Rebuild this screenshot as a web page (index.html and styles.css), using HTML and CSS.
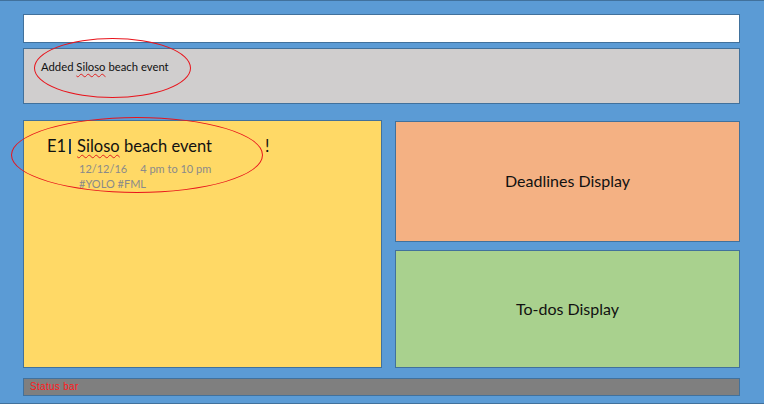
FILE: index.html
```html
<!DOCTYPE html>
<html lang="en">
<head>
<meta charset="utf-8">
<title>Event planner mockup</title>
<link rel="stylesheet" href="styles.css">
</head>
<body>
<div class="app">
  <div class="command-box"></div>
  <div class="result-box">
    <span class="result-text">Added <span class="misspelt">Siloso</span> beach event</span>
  </div>
  <div class="main">
    <div class="event-panel">
      <div class="event-card">
        <div class="event-title-row">
          <span class="event-title"><span class="event-id">E1</span><span class="event-sep"></span><span class="misspelt">Siloso</span> beach event</span>
          <span class="event-flag">!</span>
        </div>
        <div class="event-meta">
          <span class="event-date">12/12/16</span>
          <span class="event-time">4 pm to 10 pm</span>
        </div>
        <div class="event-tags">#YOLO #FML</div>
      </div>
    </div>
    <div class="side-column">
      <div class="panel deadlines">Deadlines Display</div>
      <div class="panel todos">To-dos Display</div>
    </div>
  </div>
  <div class="status-bar">Status bar</div>
  <div class="annotation annotation-result"></div>
  <div class="annotation annotation-event"></div>
</div>
</body>
</html>
```
FILE: styles.css
```css
html, body {
  margin: 0;
  padding: 0;
  background: #5b9bd5;
}

.app {
  position: relative;
  box-sizing: border-box;
  width: 764px;
  height: 404px;
  background: #5b9bd5;
  border-top: 1px solid #41719c;
  border-bottom: 1px solid #41719c;
  padding: 13px 24px 0 23px;
  display: flex;
  flex-direction: column;
  font-family: "Lato", "Open Sans", sans-serif;
  color: #111;
}

.command-box {
  box-sizing: border-box;
  height: 29px;
  background: #ffffff;
  border: 1px solid #41719c;
}

.result-box {
  box-sizing: border-box;
  height: 56px;
  margin-top: 5px;
  background: #d0cece;
  border: 1px solid #41719c;
  padding: 11px 0 0 17px;
  font-size: 11.3px;
}

.misspelt {
  text-decoration: underline wavy #e02020;
  text-decoration-thickness: 1px;
  text-underline-offset: 2px;
}

.main {
  margin-top: 16px;
  height: 248px;
  display: grid;
  grid-template-columns: 359px 345px;
  column-gap: 13px;
}

.event-panel {
  box-sizing: border-box;
  background: #ffd966;
  border: 1px solid #41719c;
  padding: 15px 0 0 23px;
}

.event-title-row {
  display: flex;
  align-items: baseline;
  font-size: 16.5px;
  color: #111;
}

.event-title {
  width: 218px;
  display: flex;
  align-items: baseline;
  white-space: pre;
}

.event-sep {
  display: inline-block;
  width: 2px;
  height: 15px;
  background: #1a3a5a;
  margin: 0 6px 0 3px;
  align-self: center;
}

.event-flag {
  font-size: 16.5px;
}

.event-meta {
  margin: 6px 0 0 32px;
  font-size: 11px;
  color: #8a8a8a;
  display: flex;
  gap: 13px;
}

.event-tags {
  margin: 2px 0 0 32px;
  font-size: 11px;
  color: #8a8a8a;
}

.side-column {
  display: flex;
  flex-direction: column;
  gap: 8px;
  padding-top: 1px;
}

.panel {
  box-sizing: border-box;
  border: 1px solid #41719c;
  display: flex;
  align-items: center;
  justify-content: center;
  font-size: 16px;
  color: #111;
  padding-bottom: 2px;
}

.deadlines {
  height: 121px;
  background: #f4b183;
}

.todos {
  height: 118px;
  background: #a9d18e;
}

.status-bar {
  box-sizing: border-box;
  margin-top: 10px;
  height: 18px;
  background: #7f7f7f;
  border: 1px solid #41719c;
  padding: 2px 0 0 6px;
  font-family: "Liberation Sans", sans-serif;
  font-size: 10px;
  color: #ff1a1a;
  letter-spacing: 0.3px;
}

.annotation {
  position: absolute;
  box-sizing: border-box;
  border: 1px solid #e8141c;
  border-radius: 50%;
}

.annotation-result {
  left: 34px;
  top: 37px;
  width: 157px;
  height: 60px;
}

.annotation-event {
  left: 11px;
  top: 116px;
  width: 252px;
  height: 76px;
}
```
